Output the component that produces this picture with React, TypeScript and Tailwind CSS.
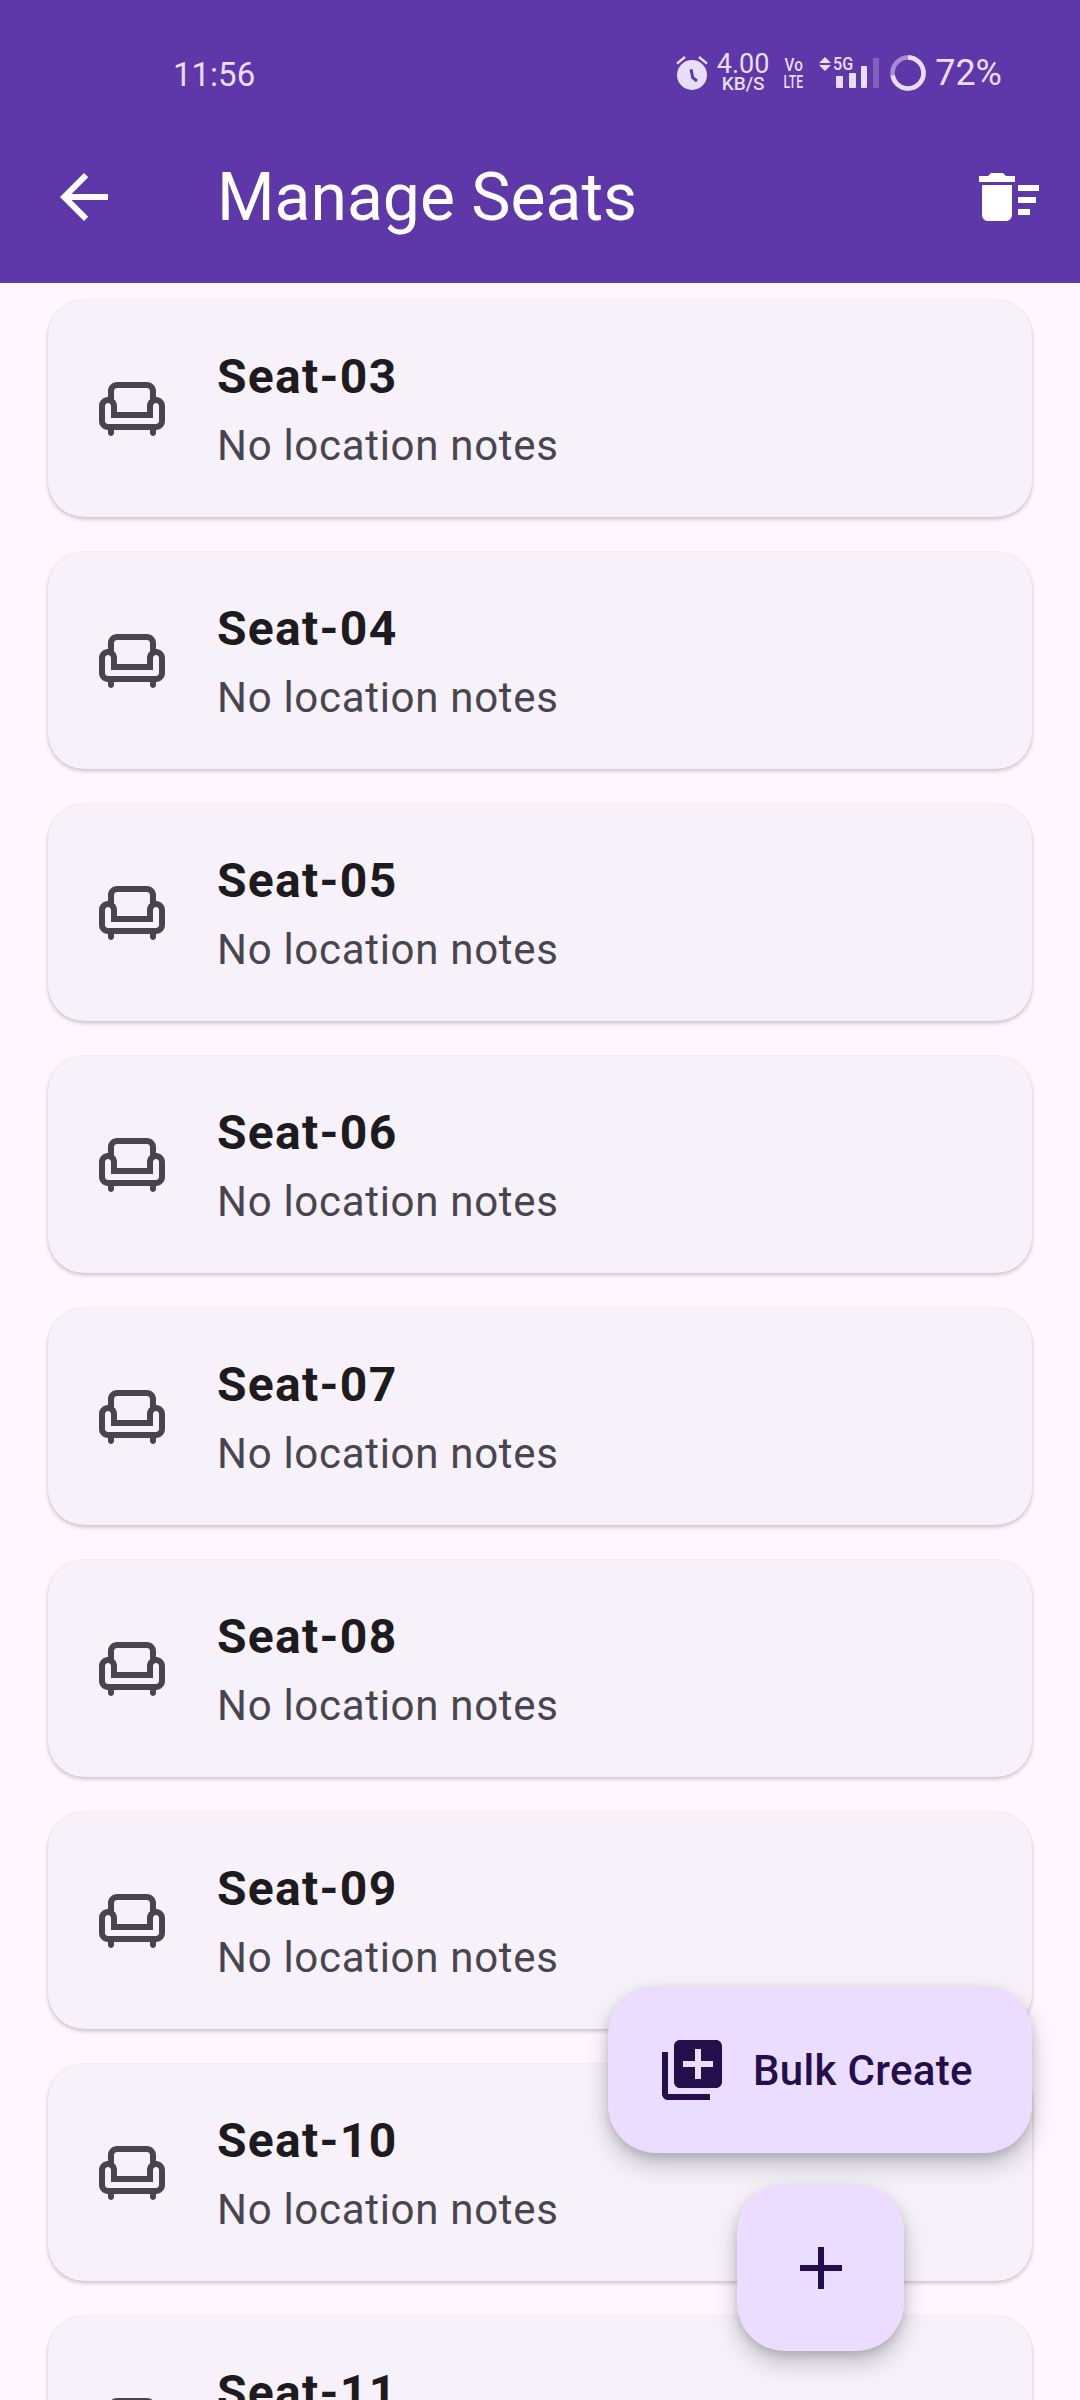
import React from 'react'
import { MdAdd, MdArrowBack, MdDeleteSweep, MdLibraryAdd, MdOutlineChair } from 'react-icons/md'

const seats = ['03', '04', '05', '06', '07', '08', '09', '10', '11']

const AlarmIcon = () => (
  <svg width="32" height="34" viewBox="0 0 32 34" className="shrink-0">
    <path d="M1 7.700 9 1M31 7.700 23 1" stroke="#e8def8" strokeWidth="2.400" fill="none" />
    <circle cx="16" cy="19" r="15" fill="#e8def8" />
    <path d="M15 13.300l1.700 8.400 4.300 3.300" stroke="#5e38a8" strokeWidth="3" fill="none" />
  </svg>
)

const SignalIcon = () => (
  <svg width="60" height="32" viewBox="0 0 60 32" className="block">
    <path d="M0 6 6 0l6 6zM0 8h12l-6 6z" fill="#e8def8" />
    <rect x="17" y="19" width="7" height="12" rx="1" fill="#e8def8" />
    <rect x="30" y="16" width="7" height="15" rx="1" fill="#e8def8" />
    <rect x="42" y="9" width="6" height="22" rx="1" fill="#e8def8" />
    <rect x="54" y="1" width="6" height="30" rx="1" fill="#e8def8" fillOpacity="0.25" />
  </svg>
)

const BatteryRing = () => (
  <svg width="36" height="36" viewBox="0 0 36 36" className="shrink-0">
    <circle cx="18" cy="18" r="15.500" stroke="#a48dd3" strokeWidth="4.500" fill="none" />
    <circle cx="18" cy="18" r="15.500" stroke="#e8def8" strokeWidth="4.500" fill="none" strokeDasharray="70.100 97.400" transform="rotate(-90 18 18)" />
  </svg>
)

const StatusBar = () => (
  <div className="h-[101px] pt-[53px] pl-[173px] pr-[78px] flex items-start justify-between text-[#e8def8]">
    <span className="text-[33px] leading-[44px]">11:56</span>
    <div className="flex items-center h-[40px]">
      <AlarmIcon />
      <div className="ml-[9px] w-[52px] mt-[2px] flex flex-col items-center">
        <span className="text-[27px] leading-[20px] whitespace-nowrap">4.00</span>
        <span className="text-[19px] leading-[20px] font-medium whitespace-nowrap">KB/S</span>
      </div>
      <div className="ml-[14px] w-[21px] flex flex-col items-center font-medium text-[18px] leading-[17px]">
        <span className="scale-x-[0.85]">Vo</span>
        <span className="scale-x-[0.68]">LTE</span>
      </div>
      <div className="ml-[15px] relative w-[60px] h-[32px] -mt-[1px]">
        <SignalIcon />
        <span className="absolute left-[14px] -top-[3px] text-[19px] leading-[20px] font-medium origin-left scale-x-[0.85]">5G</span>
      </div>
      <div className="ml-[11px] -mt-[1px]"><BatteryRing /></div>
      <span className="ml-[9px] text-[36px] leading-[40px]">72%</span>
    </div>
  </div>
)

const SeatCard = ({ num }: { num: string }) => (
  <div className="h-[217px] shrink-0 rounded-[36px] bg-[#f7f2fa] shadow-[0_2px_4px_rgba(0,0,0,0.22),0_0_2px_rgba(0,0,0,0.06)] flex items-center pl-[48px]">
    <MdOutlineChair className="w-[72px] h-[72px] text-[#49454f] shrink-0" />
    <div className="ml-[49px] mt-[3px] flex flex-col">
      <span className="text-[48px] leading-[72px] font-bold text-[#1d1b20] tracking-[1.3px]">Seat-{num}</span>
      <span className="text-[42px] leading-[66px] text-[#49454f] tracking-[0.7px]">No location notes</span>
    </div>
  </div>
)

export default function App() {
  return (
    <div className="relative w-[1080px] h-[2400px] overflow-hidden bg-[#fef7ff] font-['Roboto',sans-serif]">
      <div className="h-[283px] bg-[#5e38a8]">
        <StatusBar />
        <div className="h-[182px] flex items-center pl-[48px] pr-[35px] pt-[10px] text-white">
          <MdArrowBack className="w-[72px] h-[72px] shrink-0" />
          <span className="ml-[97px] mt-[2px] text-[66px] leading-[88px] flex-1">Manage Seats</span>
          <MdDeleteSweep className="w-[72px] h-[72px] shrink-0" />
        </div>
      </div>

      <div className="px-[48px] pt-[17px] flex flex-col gap-[35px]">
        {seats.map(s => <SeatCard key={s} num={s} />)}
      </div>

      <button className="absolute left-[608px] top-[1986px] w-[424px] h-[167px] rounded-[48px] bg-[#eaddff] text-[#240e4c] flex items-center pl-[48px] shadow-[0_12px_24px_rgba(0,0,0,0.22),0_4px_8px_rgba(0,0,0,0.12)]">
        <MdLibraryAdd className="w-[72px] h-[72px] shrink-0" />
        <span className="ml-[25px] mt-[2px] text-[42px] leading-[60px] font-medium tracking-[0.3px]">Bulk Create</span>
      </button>
      <button className="absolute left-[737px] top-[2184px] w-[167px] h-[167px] rounded-[48px] bg-[#eaddff] text-[#240e4c] flex items-center justify-center shadow-[0_12px_24px_rgba(0,0,0,0.22),0_4px_8px_rgba(0,0,0,0.12)]">
        <MdAdd className="w-[72px] h-[72px]" />
      </button>
    </div>
  )
}
